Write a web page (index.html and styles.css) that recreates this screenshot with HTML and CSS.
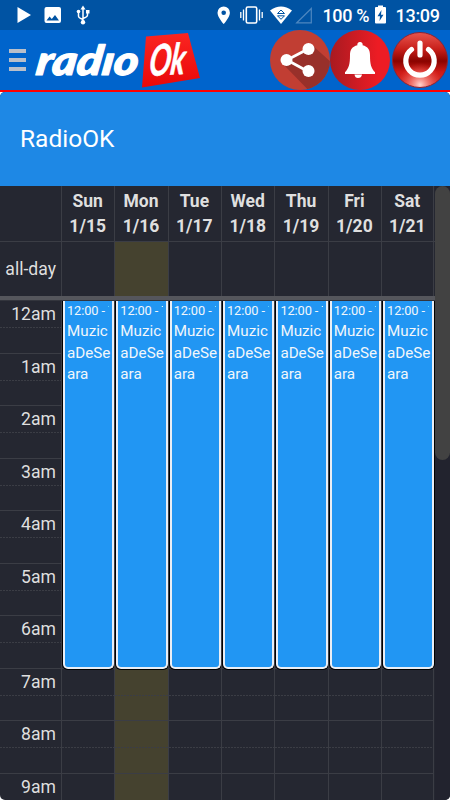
FILE: index.html
```
<!DOCTYPE html>
<html lang="en">
<head>
    <meta charset="UTF-8">
    <meta name="viewport" content="width=device-width, initial-scale=1.0">
    <title>RadioOK</title>
    <link rel="stylesheet" href="styles.css">
</head>
<body>
    <div class="status-bar">
        <svg width="450" height="30" viewBox="0 0 450 30" fill="#fff">
            <path d="M17.5 7v16L31 15z"/>
            <path fill-rule="evenodd" d="M46.5 7h12.500a2 2 0 0 1 2 2v12a2 2 0 0 1-2 2H46.500a2 2 0 0 1-2-2V9a2 2 0 0 1 2-2zM46.500 20.500h12.500l-4-5.500-3.200 4-2.200-2.500z"/>
            <!-- usb -->
            <g fill="none" stroke="#fff" stroke-width="1.500">
                <path d="M83 8v14M78.500 11v5q0 2 4.500 3.500M87.500 11v4q0 2-4.500 3.500"/>
            </g>
            <path d="M83 5.500l2.500 4h-5z"/>
            <circle cx="83" cy="22.300" r="2.200"/>
            <circle cx="78.500" cy="11.500" r="1.800"/>
            <path d="M86 10h3.500v3.500H86z"/>
            <!-- location -->
            <path fill-rule="evenodd" d="M223.700 6.500a6.200 6.200 0 0 0-6.200 6.200c0 4.500 6.200 11.300 6.200 11.300s6.200-6.800 6.200-11.300a6.200 6.200 0 0 0-6.200-6.200zm0 3.900a2.300 2.300 0 1 1 0 4.600 2.300 2.300 0 0 1 0-4.600z"/>
            <!-- vibrate -->
            <rect x="246.300" y="7" width="10.400" height="16" rx="1.500" fill="none" stroke="#fff" stroke-width="1.600"/>
            <path d="M243.500 9.500v11M240.800 12v6M259.500 9.500v11M262.200 12v6" stroke="#fff" stroke-width="1.300"/>
            <!-- wifi and signal -->
            <path d="M270 10.500Q281 2.500 292 10.500L281 24z"/>
            <path d="M277.500 13.500l3.500-3.500 3.500 3.500zM277.500 15.800h7l-3.500 3.500z" fill="none" stroke="#0053a3" stroke-width="1"/>
            <path d="M296.800 22.800L311.300 8.500v14.300z" fill="none" stroke="#4d87c0" stroke-width="1.200"/>
            <text x="322.500" y="21.500" textLength="47">100 %</text>
            <path d="M378 5.500h5V7h2q1 0 1 1v14.500q0 1-1 1h-9q-1 0-1-1V8q0-1 1-1h2z"/>
            <path d="M381.500 10l-4 6.200h2.500l-.5 4.800 4-6.300H381z" fill="#0053a3"/>
            <text x="395.500" y="21.500" textLength="44.500">13:09</text>
        </svg>
    </div>

    <div class="navbar">
        <button class="menu-btn" aria-label="Menu"><span></span><span></span><span></span></button>
        <svg class="logo" width="170" height="60" viewBox="0 0 170 60">
            <defs>
                <linearGradient id="tag" x2="0" y2="1">
                    <stop offset="0" stop-color="#fb2522"/>
                    <stop offset="1" stop-color="#e90808"/>
                </linearGradient>
            </defs>
            <path d="M116 6.500L158 3l12 45-58 9.500z" fill="url(#tag)"/>
            <text class="logo-radio" transform="translate(5 45) skewX(-8)" textLength="102" lengthAdjust="spacingAndGlyphs">radıo</text>
            <text class="logo-ok" transform="translate(118 46) rotate(-3) skewX(-10)" textLength="36" lengthAdjust="spacingAndGlyphs">Ok</text>
        </svg>
        <div class="actions">
            <svg width="60" height="60" viewBox="0 0 60 60">
                <defs><clipPath id="shareClip"><circle cx="30" cy="30" r="30"/></clipPath></defs>
                <circle cx="30" cy="30" r="30" fill="#c13e33"/>
                <path clip-path="url(#shareClip)" d="M42 15l22 20v35H48L13 34l5-4z" fill="#98302a"/>
                <path d="M38 19L17 30l22 12" fill="none" stroke="#fff" stroke-width="2.800"/>
                <circle cx="38.500" cy="19" r="6" fill="#fff"/>
                <circle cx="16.500" cy="30" r="6" fill="#fff"/>
                <circle cx="38.500" cy="41" r="6" fill="#fff"/>
            </svg>
            <svg width="60" height="60" viewBox="0 0 60 60">
                <defs>
                    <linearGradient id="bell">
                        <stop offset="0" stop-color="#a81a21"/>
                        <stop offset=".8" stop-color="#ed1c24"/>
                    </linearGradient>
                </defs>
                <circle cx="30" cy="30" r="30" fill="url(#bell)"/>
                <path d="M30 12a2.500 2.500 0 0 1 2.600 3.200C38 16.500 40 20 40 25c0 9 1 13 5 17.300V44H15v-1.700C19 38 20 34 20 25c0-5 2-8.500 7.400-9.800A2.500 2.500 0 0 1 30 12zM24.500 44.500h7.500q-.5 3.500-4 3.500-3 0-3.500-3.500z" fill="#fff"/>
            </svg>
            <svg width="60" height="60" viewBox="0 0 60 60">
                <defs>
                    <linearGradient id="powerBg" x2="0" y2="1">
                        <stop offset="0" stop-color="#e8554e"/>
                        <stop offset=".3" stop-color="#c8201b"/>
                        <stop offset=".52" stop-color="#8a0300"/>
                        <stop offset=".72" stop-color="#cf1a16"/>
                        <stop offset="1" stop-color="#d8332c"/>
                    </linearGradient>
                    <radialGradient id="powerGlow" cy=".95" r=".4">
                        <stop offset="0" stop-color="#ffd5cf"/>
                        <stop offset="1" stop-color="#ff5a50" stop-opacity="0"/>
                    </radialGradient>
                </defs>
                <circle cx="30" cy="30" r="27.500" fill="url(#powerBg)"/>
                <circle cx="30" cy="30" r="27.500" fill="url(#powerGlow)" stroke="#8b2335" stroke-width="1"/>
                <path d="M21.500 19.500a14.200 14.200 0 1 0 17 0M30 13v12" fill="none" stroke="#fff" stroke-width="5.200" stroke-linecap="round"/>
            </svg>
        </div>
    </div>

    <div class="page">
        <div class="card">
            <div class="card-title">RadioOK</div>
            <div class="calendar">
                <div class="schedule">
                    <div class="row head" id="head">
                        <div class="axis"></div>
                    </div>
                    <div class="row all-day" id="allDay">
                        <div class="axis">all-day</div>
                    </div>
                    <div class="divider"></div>
                    <div class="row time-grid" id="timeGrid">
                        <div class="axis" id="hours"></div>
                    </div>
                </div>
                <div class="scrollbar"><div class="thumb"></div></div>
            </div>
        </div>
    </div>

    <script>
        const days = ["Sun", "Mon", "Tue", "Wed", "Thu", "Fri", "Sat"];
        const hours = ["12am", "1am", "2am", "3am", "4am", "5am", "6am", "7am", "8am", "9am"];
        const head = document.getElementById("head");
        const allDay = document.getElementById("allDay");
        const timeGrid = document.getElementById("timeGrid");

        // Hour labels on the left
        document.getElementById("hours").innerHTML = hours.map(h => `<div class="hour">${h}</div>`).join("");

        // One column per day
        days.forEach((day, i) => {
            const today = day === "Mon" ? " today" : "";
            head.innerHTML += `<div class="day">${day}<br>1/${15 + i}</div>`;
            allDay.innerHTML += `<div class="day${today}"></div>`;
            timeGrid.innerHTML += `
                <div class="day${today}">
                    ${hours.map(() => `<div class="hour"></div>`).join("")}
                    <div class="event">
                        <div class="event-time">12:00 - 7</div>
                        <div class="event-title">MuzicaDeSeara</div>
                    </div>
                </div>`;
        });
    </script>
</body>
</html>
```
FILE: styles.css
```
* {
    box-sizing: border-box;
}

body {
    font-family: Roboto, sans-serif;
    margin: 0;
    height: 800px;
    display: flex;
    flex-direction: column;
    overflow: hidden;
    background-color: #fff;
}

.status-bar {
    height: 30px;
    background-color: #0053a3;
}

.status-bar svg {
    display: block;
}

.status-bar text {
    font-size: 18px;
    font-weight: 500;
}

.navbar {
    display: flex;
    align-items: center;
    height: 62px;
    padding-left: 9px;
    background-color: #0064cc;
    border-bottom: 2px solid #ff0000;
}

.menu-btn {
    display: flex;
    flex-direction: column;
    gap: 5px;
    width: 17px;
    padding: 0;
    border: none;
    background: none;
}

.menu-btn span {
    height: 4px;
    background-color: #b9bfca;
}

.logo {
    margin-left: 4px;
    fill: #fff;
}

.logo text {
    font-family: Lato, sans-serif;
    font-style: italic;
    font-weight: 900;
    stroke: #fff;
    stroke-width: 1.2px;
    stroke-linejoin: round;
}

.logo .logo-radio {
    font-size: 41px;
}

.logo .logo-ok {
    font-size: 43px;
    font-weight: 700;
    stroke-width: 0.6px;
}

.actions {
    display: flex;
    margin-left: auto;
}

.page {
    flex: 1;
    min-height: 0;
}

.card {
    display: flex;
    flex-direction: column;
    height: 100%;
    border-radius: 5px;
    overflow: hidden;
    background-color: #252731;
}

.card-title {
    height: 94px;
    padding: 0 20px;
    line-height: 93px;
    font-size: 24.5px;
    color: #fff;
    background-color: #1e88e5;
}

.calendar {
    display: flex;
    flex: 1;
    min-height: 0;
    color: #dfdfdf;
}

.schedule {
    display: flex;
    flex-direction: column;
    width: 435px;
}

.row {
    display: grid;
    grid-template-columns: 61px repeat(7, 53.35px);
}

.day {
    position: relative;
    border-left: 1px solid #3b3d45;
}

.day:last-child {
    border-right: 1px solid #3b3d45;
}

.today {
    background-color: #45422f;
}

.head {
    height: 56px;
    border-bottom: 1px solid #3b3d45;
    font-size: 17.5px;
    font-weight: 700;
    line-height: 25px;
    text-align: center;
}

.head .day {
    padding-top: 3px;
    padding-right: 1px;
}

.axis {
    font-size: 17.6px;
    text-align: right;
}

.all-day {
    height: 54px;
}

.all-day .axis {
    padding-right: 5px;
    line-height: 54px;
}

.divider {
    height: 5px;
    background-color: #55565c;
    border-bottom: 1px solid #33353d;
}

.time-grid {
    flex: 1;
    min-height: 0;
    overflow: hidden;
}

.hour {
    height: 52.5px;
    padding-right: 5px;
    line-height: 26px;
    border-bottom: 1px solid #3b3d45;
    background: repeating-linear-gradient(90deg, #3b3d45 0 2px, transparent 2px 3px) 0 26px / 100% 1px no-repeat;
}

/* covers midnight to 7am */
.event {
    position: absolute;
    top: 0;
    left: 1px;
    right: 0;
    height: 367.5px;
    padding-left: 2px;
    border: 2px solid #e9eef5;
    border-top: none;
    border-radius: 0 0 5px 5px;
    box-shadow: 0 0 0 1px #000;
    background-color: #2196f3;
    color: #f1f6fb;
    overflow: hidden;
}

.day:last-child .event {
    right: -1px;
}

.event-time {
    margin-right: 3px;
    font-size: 12.8px;
    line-height: 20px;
    letter-spacing: -0.1px;
    white-space: nowrap;
    overflow: hidden;
}

.event-title {
    font-size: 15.2px;
    line-height: 21.5px;
    word-break: break-all;
}

.scrollbar {
    flex: 1;
    background-color: #22232e;
}

.thumb {
    height: 274px;
    border-radius: 8px;
    background-color: #424242;
}
```
